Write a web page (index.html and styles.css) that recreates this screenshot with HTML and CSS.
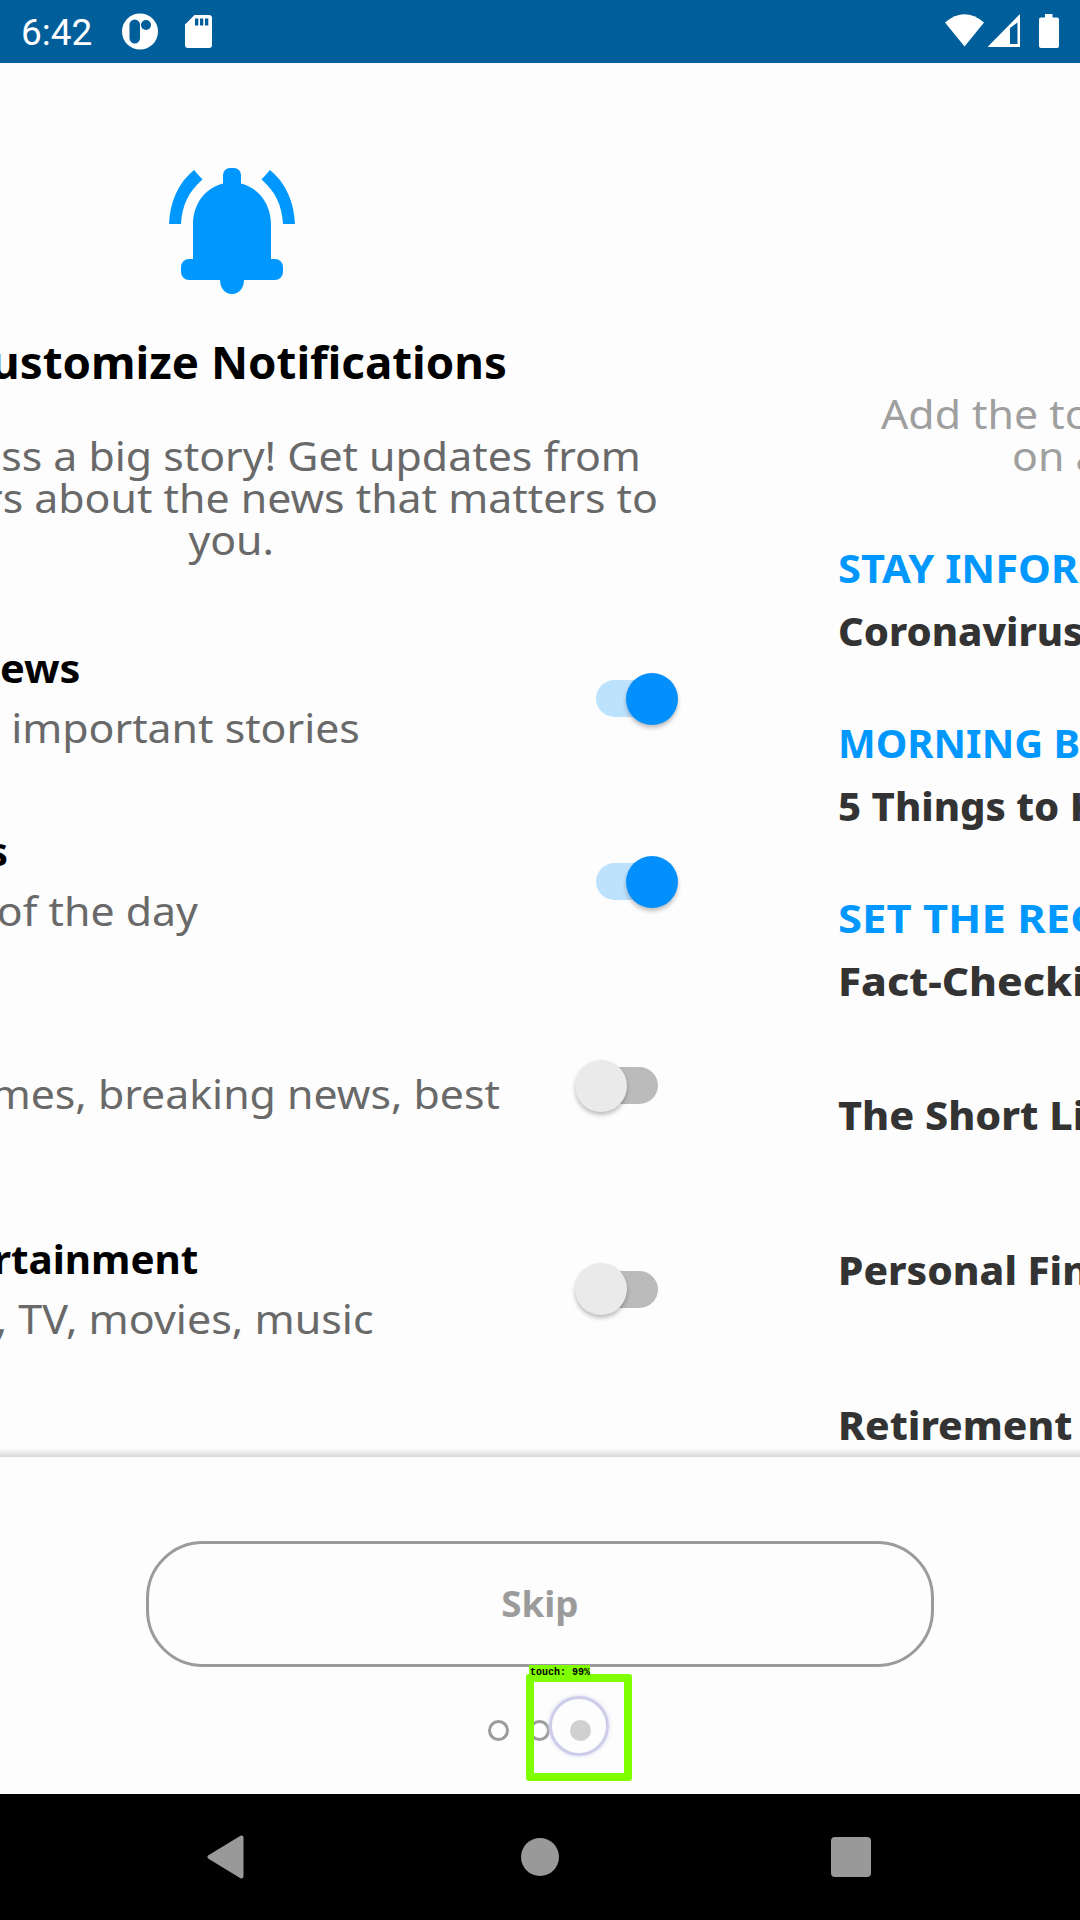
FILE: index.html
```html
<!DOCTYPE html>
<html lang="en">
<head>
<meta charset="utf-8">
<title>Customize Notifications</title>
<link rel="stylesheet" href="styles.css">
</head>
<body>
<header class="status">
  <span class="clock">6:42</span>
  <svg class="app-icon" width="36" height="37" viewBox="0 0 36 37"><circle cx="18" cy="18.500" r="18" fill="#fff"/><rect x="7.500" y="6.500" width="10.500" height="24" rx="5.250" fill="#005e9b"/><circle cx="24" cy="12" r="5" fill="#005e9b"/></svg>
  <svg class="sd-icon" width="27" height="33" viewBox="0 0 27 33"><path fill="#fff" fill-rule="evenodd" d="M9.500 0H24a3 3 0 0 1 3 3v27a3 3 0 0 1-3 3H3a3 3 0 0 1-3-3V9.500ZM10 3.500v7h3.300v-7Zm5 0v7h3.300v-7Zm5 0v7h3.300v-7Z"/></svg>
  <svg class="signals" width="115" height="35" viewBox="0 0 115 35"><g fill="#fff"><path d="M0 8.500Q19.500-8 39 8.500L19.500 32.500Z"/><path fill-rule="evenodd" d="M75 0V33H42.500ZM65 14V30H72.500V8.500Z"/><path d="M100 0h7.500v3.500H112a2 2 0 0 1 2 2V32a2 2 0 0 1-2 2H96a2 2 0 0 1-2-2V5.500a2 2 0 0 1 2-2h4Z"/></g></svg>
</header>
<main class="pager">
  <section class="notifications">
    <svg class="bell" width="126" height="126" viewBox="0 0 126 126"><g fill="#0098fe"><path d="M24 91V57C24 36 36 20 54 15.500V7a7 7 0 0 1 7-7h4a7 7 0 0 1 7 7v8.500C90 20 102 36 102 57v34h4a8 8 0 0 1 8 8v5a8 8 0 0 1-8 8H75c0 8-5 14-12 14s-12-6-12-14H20a8 8 0 0 1-8-8v-5a8 8 0 0 1 8-8Z"/><path d="M0 56C1 34 9 15 25 2l8.500 9.500C20 23 13 37 12 56ZM126 56C125 34 117 15 101 2l-8.500 9.500C106 23 113 37 114 56Z"/></g></svg>
    <h1 class="heading"><span>ustomize Notifications</span></h1>
    <div class="intro">
      <p class="line intro-a"><span>ss a big story! Get updates from</span></p>
      <p class="line intro-b"><span>rs about the news that matters to</span></p>
      <p class="line intro-c"><span>you.</span></p>
    </div>
    <div class="row">
      <div class="copy"><h2 class="line name-a"><span>ews</span></h2><p class="line desc-a"><span>important stories</span></p></div>
      <i class="switch on"></i>
    </div>
    <div class="row">
      <div class="copy"><h2 class="line name-b"><span>s</span></h2><p class="line desc-b"><span>of the day</span></p></div>
      <i class="switch on"></i>
    </div>
    <div class="row tall">
      <div class="copy"><p class="line desc-c"><span>mes, breaking news, best</span></p></div>
      <i class="switch"></i>
    </div>
    <div class="row">
      <div class="copy"><h2 class="line name-d"><span>rtainment</span></h2><p class="line desc-d"><span>, TV, movies, music</span></p></div>
      <i class="switch"></i>
    </div>
  </section>
  <section class="newsletters">
    <div class="add"><p>Add the topics</p><p class="second">on a</p></div>
    <article class="letter"><h3 class="w-a">STAY INFOR</h3><p>Coronavirus</p></article>
    <article class="letter"><h3>MORNING B</h3><p>5 Things to K</p></article>
    <article class="letter"><h3 class="w-d">SET THE REC</h3><p class="w-e">Fact-Checki</p></article>
    <article class="letter single first"><p class="w-f">The Short Li</p></article>
    <article class="letter single"><p class="w-g">Personal Fin</p></article>
    <article class="letter single"><p class="w-g">Retirement</p></article>
  </section>
</main>
<footer class="actions">
  <button class="skip"><span>Skip</span></button>
  <div class="dots"><i></i><i></i><i class="current"></i></div>
  <div class="touch"><span class="label">touch: 99%</span><i class="ring"></i></div>
</footer>
<nav class="navbar">
  <svg width="38" height="44" viewBox="0 0 38 44"><path d="M34.500 2.500V41.500L2.500 22Z" fill="#999" stroke="#999" stroke-width="4" stroke-linejoin="round"/></svg>
  <i class="home"></i>
  <i class="recent"></i>
</nav>
</body>
</html>
```
FILE: styles.css
```css
* { box-sizing: border-box; }
body { margin: 0; width: 1080px; height: 1920px; overflow: hidden; background: #fdfdfd; font-family: "Noto Sans", sans-serif; display: flex; flex-direction: column; }
h1, h2, h3, p { margin: 0; font-size: 40px; white-space: nowrap; }
p { font-weight: 400; }
svg { display: block; flex: none; }
.status { height: 63px; flex: none; background: #005e9b; display: flex; align-items: flex-start; padding-left: 21px; }
.clock { width: 101px; color: #fff; font: 400 37px/43px Roboto, sans-serif; margin-top: 11px; }
.app-icon { margin-top: 13px; }
.sd-icon { margin: 15px 0 0 27px; }
.signals { margin: 14px 20px 0 auto; }

.pager { height: 1394px; flex: none; display: flex; overflow: hidden; position: relative; }
.pager::after { content: ""; position: absolute; left: 0; right: 0; bottom: 0; height: 9px; background: linear-gradient(rgba(0,0,0,0), rgba(0,0,0,.15)); }
.notifications { width: 772px; flex: none; padding-top: 105px; }
.bell { margin-left: 169px; }
.heading { width: 507px; margin-top: 42px; height: 52px; display: flex; justify-content: flex-end; font-size: 44px; line-height: 52px; color: #000; }
.heading span { transform: scaleX(1.038); transform-origin: right; }
.line { display: flex; justify-content: flex-end; line-height: 60px; color: #696969; }
.line span { transform: scaleX(1.07); transform-origin: right; }
.intro { margin-top: 47px; height: 203px; }
.intro .line { line-height: 42px; }
.intro-a { width: 641px; }
.intro-b { width: 658px; }
.intro-c { width: 274px; }
.row { height: 183px; display: flex; }
.row.tall { height: 225px; padding-top: 20px; }
.copy { width: 576px; flex: none; }
h2.line { color: #000; }
h2.line span { transform: scaleX(1.01); }
h2.name-a span { transform: scaleX(1.04); }
.tall .copy { padding-top: 40px; }
.name-a { width: 80px; }
.desc-a { width: 360px; }
.name-b { width: 8px; }
.desc-b { width: 198px; }
.desc-c { width: 500px; }
.name-d { width: 198px; }
.desc-d { width: 374px; }
.desc-d span { transform: scaleX(1.075); }
.switch { width: 62px; height: 37px; border-radius: 19px; background: #bbb; position: relative; margin: 42px 0 0 20px; }
.tall .switch { margin-top: 43px; }
.switch::after { content: ""; position: absolute; left: -21px; top: -8px; width: 52px; height: 52px; border-radius: 50%; background: #eaeaea; box-shadow: 0 3px 4px rgba(0,0,0,.25); }
.tall .switch::after { top: -7px; }
.switch.on { background: #bce2fe; }
.switch.on::after { left: 30px; top: -7px; background: #0490fc; }

.newsletters { width: 308px; padding: 322px 0 0 66px; overflow: hidden; }
.newsletters h3, .newsletters p { transform-origin: left; }
.add { height: 144px; padding-left: 43px; color: #9f9f9f; }
.add p { line-height: 42px; margin-top: 8px; transform: scaleX(1.07); }
.add .second { margin: 0 0 0 131px; }
.letter { height: 175px; line-height: 63px; }
.letter h3 { color: #0098fe; line-height: 62px; }
.letter p { color: #333; font-weight: 800; }
.letter.single { height: 155px; }
.letter.first { margin-top: 21px; }
.w-a { transform: scaleX(1.04); }
.w-d { transform: scaleX(1.09); }
.w-e { transform: scaleX(1.06); }
.w-f { transform: scaleX(1.03); }
.w-g { transform: scaleX(1.015); }

.actions { height: 337px; flex: none; position: relative; display: flex; flex-direction: column; align-items: center; padding-top: 84px; }
.skip { width: 788px; height: 126px; border: 3px solid #9b9b9b; border-radius: 57px; background: transparent; color: #9b9b9b; font: 700 35px/50px "Noto Sans", sans-serif; padding: 0; }
.skip span { display: inline-block; transform: scaleX(1.05); }
.dots { display: flex; gap: 20px; margin: 53px 2px 0 0; }
.dots i { width: 21px; height: 21px; border: 3px solid #9b9b9b; border-radius: 50%; }
.dots i.current { border: 0; background: #d0d0d0; }
.touch { position: absolute; left: 526px; top: 217px; width: 106px; height: 107px; border: 8px solid #80ff00; border-radius: 3px; }
.label { position: absolute; left: -5px; top: -17px; width: 61px; height: 12px; background: #80ff00; color: #000; font: 700 10px/15px "Liberation Mono", monospace; white-space: pre; padding-left: 1px; }
.ring { position: absolute; left: 15px; top: 14px; width: 60px; height: 60px; border: 3px solid #cdcdea; border-radius: 50%; box-shadow: 0 0 4px #d8d8f4; }
.navbar { height: 126px; flex: none; background: #000; display: flex; align-items: center; justify-content: space-between; padding: 0 209px 0 207px; }
.home { width: 38px; height: 38px; border-radius: 50%; background: #999; margin-left: 4px; }
.recent { width: 40px; height: 40px; border-radius: 4px; background: #999; }
```
